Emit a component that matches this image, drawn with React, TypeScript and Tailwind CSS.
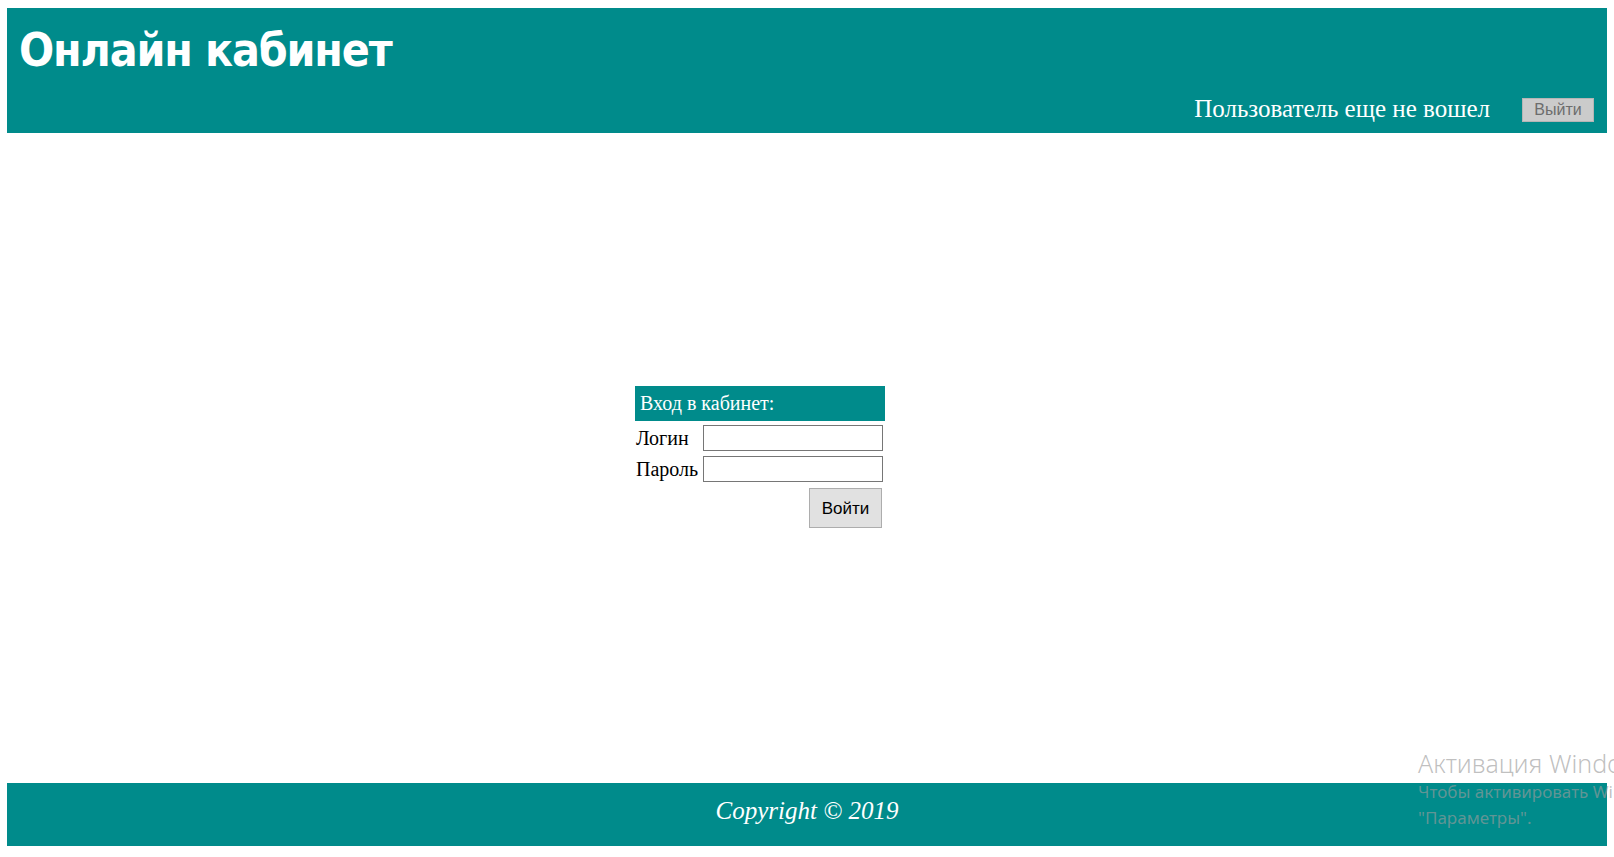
import React from "react";

export default function App() {
  return (
    <div className="relative h-[857px] w-full overflow-hidden bg-white">
      <div className="flex h-full flex-col px-[7px] pt-[8px] pb-[11px]">
        {/* Header */}
        <header className="flex h-[125px] shrink-0 flex-col justify-between bg-[#008b8b]">
          <h1
            className="mt-[19px] pl-[12px] text-[46px] font-bold leading-none tracking-[-1.15px] text-white"
            style={{ fontFamily: '"DejaVu Sans Condensed", "DejaVu Sans", Verdana, sans-serif' }}
          >
            Онлайн кабинет
          </h1>
          <div className="flex items-end justify-end pr-[13px]">
            <span
              className="mb-[12px] mr-[32px] text-[25px] leading-[25px] text-white"
              style={{ fontFamily: '"Liberation Serif", "Times New Roman", serif' }}
            >
              Пользователь еще не вошел
            </span>
            <button
              disabled
              className="mb-[11px] flex h-[24px] w-[72px] items-center justify-center border border-[#b5b5b5] bg-[#cbcbcb] text-[16px] leading-none text-[#6d6d6d]"
              style={{ fontFamily: '"Liberation Sans", Arial, sans-serif' }}
            >
              Выйти
            </button>
          </div>
        </header>

        {/* Main */}
        <main className="flex-1 pl-[628px] pt-[253px]">
          <div className="w-[250px]" style={{ fontFamily: '"Liberation Serif", "Times New Roman", serif' }}>
            <div className="h-[35px] bg-[#008b8b] pl-[5px] text-[20px] leading-[35px] text-white">
              Вход в кабинет:
            </div>
            <div className="mt-[4px] grid grid-cols-[66px_180px] gap-x-[2px] gap-y-[5px]">
              <div className="flex h-[26px] items-center pl-[1px] text-[20px] leading-[26px] text-black">Логин</div>
              <input type="text" className="h-[26px] w-[180px] border border-[#767676] bg-white outline-none" />
              <div className="flex h-[26px] items-center pl-[1px] text-[20px] leading-[26px] text-black">Пароль</div>
              <input type="password" className="h-[26px] w-[180px] border border-[#767676] bg-white outline-none" />
            </div>
            <div className="mt-[6px] flex justify-end pr-[3px]">
              <button
                className="flex h-[40px] w-[73px] items-center justify-center border border-[#adadad] bg-[#e1e1e1] text-[17px] leading-none text-black"
                style={{ fontFamily: '"Liberation Sans", Arial, sans-serif' }}
              >
                Войти
              </button>
            </div>
          </div>
        </main>

        {/* Footer */}
        <footer className="h-[63px] shrink-0 bg-[#008b8b] pt-[16px] text-center">
          <span
            className="text-[25px] italic leading-[24px] text-white"
            style={{ fontFamily: '"Liberation Serif", "Times New Roman", serif' }}
          >
            Copyright © 2019
          </span>
        </footer>
      </div>

      {/* Windows activation watermark overlay */}
      <div
        className="pointer-events-none absolute left-[1418px] top-[748px] whitespace-nowrap text-[rgba(155,155,155,0.64)]"
        style={{ fontFamily: '"Noto Sans", "Open Sans", sans-serif' }}
      >
        <div className="text-[25px] font-light leading-[30px]">Активация Windows</div>
        <div className="mt-[2px] text-[17px] leading-[24px]">Чтобы активировать Windows, перейдите в раздел</div>
        <div className="mt-[2px] text-[17px] leading-[24px]">"Параметры".</div>
      </div>
    </div>
  );
}
